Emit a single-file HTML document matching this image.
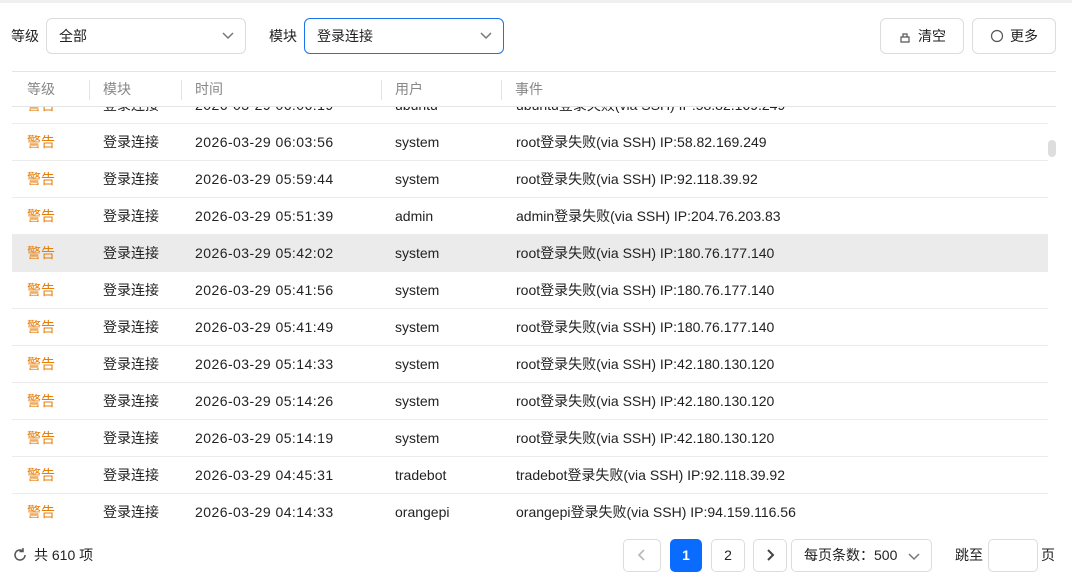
<!DOCTYPE html>
<html><head><meta charset="utf-8"><style>
*{box-sizing:border-box;margin:0;padding:0}
body{width:1072px;height:588px;overflow:hidden;background:#fff;font-family:"Liberation Sans","Noto Sans CJK SC",sans-serif;font-size:14px;color:#222;position:relative}
.top{position:absolute;left:0;top:0;width:1072px;height:3px;background:#f0f0f0}
.abs{position:absolute;line-height:20px}
.sel{position:absolute;height:36px;border:1px solid #dcdcdc;border-radius:6px;padding-left:12px;line-height:34px}
.sel svg{position:absolute;right:10px;top:12px}
.btn{position:absolute;height:36px;border:1px solid #dcdcdc;border-radius:6px;line-height:34px;text-align:center}
.hdr{position:absolute;left:12px;top:71px;width:1044px;height:36px;border-top:1px solid #e4e4e4;border-bottom:1px solid #e4e4e4;color:#888}
.hdr span{position:absolute;top:0;line-height:34px}
.sep{position:absolute;top:8px;width:1px;height:20px;background:#e4e4e4}
.body{position:absolute;left:12px;top:107px;width:1036px;height:424px;overflow:hidden}
.row{position:absolute;left:0;width:1036px;height:37px;border-bottom:1px solid #ececec}
.row span{position:absolute;top:0;line-height:36px;white-space:nowrap}
.row span:nth-child(3){letter-spacing:.45px}
.w{color:#e67e0a;left:15px}
.pg{position:absolute;top:539px;height:33px;border:1px solid #dcdcdc;border-radius:5px;text-align:center;line-height:31px}
</style></head><body>
<div class="top"></div>
<div class="abs" style="left:11px;top:26px">等级</div>
<div class="sel" style="left:46px;top:18px;width:200px">全部<svg width="14" height="10"><path d="M2 2l5 5 5-5" fill="none" stroke="#777" stroke-width="1.5"/></svg></div>
<div class="abs" style="left:269px;top:26px">模块</div>
<div class="sel" style="left:304px;top:18px;width:200px;border-color:#1a73e8">登录连接<svg width="14" height="10"><path d="M2 2l5 5 5-5" fill="none" stroke="#777" stroke-width="1.5"/></svg></div>
<div class="btn" style="left:880px;top:18px;width:84px"><svg width="14" height="14" style="vertical-align:-2px;margin-right:6px"><path d="M3 8h8v5H3zM5 8V5h4v3" fill="none" stroke="#555" stroke-width="1.2"/></svg>清空</div>
<div class="btn" style="left:972px;top:18px;width:84px"><svg width="14" height="14" style="vertical-align:-2px;margin-right:6px"><circle cx="7" cy="7" r="5.5" fill="none" stroke="#555" stroke-width="1.2"/></svg>更多</div>
<div class="hdr">
<span style="left:15px">等级</span><div class="sep" style="left:77px"></div>
<span style="left:91px">模块</span><div class="sep" style="left:169px"></div>
<span style="left:183px">时间</span><div class="sep" style="left:369px"></div>
<span style="left:383px">用户</span><div class="sep" style="left:489px"></div>
<span style="left:503px">事件</span>
</div>
<div class="body">
<div class="row" style="top:-20px"><span class="w">警告</span><span style="left:91px">登录连接</span><span style="left:183px">2026-03-29 06:06:19</span><span style="left:383px">ubuntu</span><span style="left:504px">ubuntu登录失败(via SSH) IP:58.82.169.249</span></div>
<div class="row" style="top:17px"><span class="w">警告</span><span style="left:91px">登录连接</span><span style="left:183px">2026-03-29 06:03:56</span><span style="left:383px">system</span><span style="left:504px">root登录失败(via SSH) IP:58.82.169.249</span></div>
<div class="row" style="top:54px"><span class="w">警告</span><span style="left:91px">登录连接</span><span style="left:183px">2026-03-29 05:59:44</span><span style="left:383px">system</span><span style="left:504px">root登录失败(via SSH) IP:92.118.39.92</span></div>
<div class="row" style="top:91px"><span class="w">警告</span><span style="left:91px">登录连接</span><span style="left:183px">2026-03-29 05:51:39</span><span style="left:383px">admin</span><span style="left:504px">admin登录失败(via SSH) IP:204.76.203.83</span></div>
<div class="row" style="top:128px;background:#ebebeb"><span class="w">警告</span><span style="left:91px">登录连接</span><span style="left:183px">2026-03-29 05:42:02</span><span style="left:383px">system</span><span style="left:504px">root登录失败(via SSH) IP:180.76.177.140</span></div>
<div class="row" style="top:165px"><span class="w">警告</span><span style="left:91px">登录连接</span><span style="left:183px">2026-03-29 05:41:56</span><span style="left:383px">system</span><span style="left:504px">root登录失败(via SSH) IP:180.76.177.140</span></div>
<div class="row" style="top:202px"><span class="w">警告</span><span style="left:91px">登录连接</span><span style="left:183px">2026-03-29 05:41:49</span><span style="left:383px">system</span><span style="left:504px">root登录失败(via SSH) IP:180.76.177.140</span></div>
<div class="row" style="top:239px"><span class="w">警告</span><span style="left:91px">登录连接</span><span style="left:183px">2026-03-29 05:14:33</span><span style="left:383px">system</span><span style="left:504px">root登录失败(via SSH) IP:42.180.130.120</span></div>
<div class="row" style="top:276px"><span class="w">警告</span><span style="left:91px">登录连接</span><span style="left:183px">2026-03-29 05:14:26</span><span style="left:383px">system</span><span style="left:504px">root登录失败(via SSH) IP:42.180.130.120</span></div>
<div class="row" style="top:313px"><span class="w">警告</span><span style="left:91px">登录连接</span><span style="left:183px">2026-03-29 05:14:19</span><span style="left:383px">system</span><span style="left:504px">root登录失败(via SSH) IP:42.180.130.120</span></div>
<div class="row" style="top:350px"><span class="w">警告</span><span style="left:91px">登录连接</span><span style="left:183px">2026-03-29 04:45:31</span><span style="left:383px">tradebot</span><span style="left:504px">tradebot登录失败(via SSH) IP:92.118.39.92</span></div>
<div class="row" style="top:387px;border:none"><span class="w">警告</span><span style="left:91px">登录连接</span><span style="left:183px">2026-03-29 04:14:33</span><span style="left:383px">orangepi</span><span style="left:504px">orangepi登录失败(via SSH) IP:94.159.116.56</span></div>
</div>
<div class="abs" style="left:1048px;top:140px;width:8px;height:17px;border-radius:4px;background:#ddd"></div>
<div class="abs" style="left:12px;top:545px"><svg width="16" height="16" style="vertical-align:-3px;margin-right:6px"><path d="M13 8A5 5 0 1 1 11 4M11 1v3.5H7.5" fill="none" stroke="#555" stroke-width="1.5"/></svg>共 610 项</div>
<div class="pg" style="left:623px;width:38px"><svg width="10" height="12" style="vertical-align:-1px"><path d="M7 1L2 6l5 5" fill="none" stroke="#bbb" stroke-width="1.8"/></svg></div>
<div class="pg" style="left:670px;width:32px;background:#0a6cff;border-color:#0a6cff;color:#fff;font-weight:bold">1</div>
<div class="pg" style="left:711px;width:34px">2</div>
<div class="pg" style="left:753px;width:34px"><svg width="10" height="12" style="vertical-align:-1px"><path d="M3 1l5 5-5 5" fill="none" stroke="#444" stroke-width="2"/></svg></div>
<div class="pg" style="left:791px;width:141px;padding-left:12px;text-align:left">每页条数：500<svg width="14" height="10" style="position:absolute;right:10px;top:12px"><path d="M2 2l5 5 5-5" fill="none" stroke="#777" stroke-width="1.5"/></svg></div>
<div class="abs" style="left:955px;top:545px">跳至</div>
<div class="pg" style="left:988px;width:50px"></div>
<div class="abs" style="left:1041px;top:545px">页</div>
</body></html>
